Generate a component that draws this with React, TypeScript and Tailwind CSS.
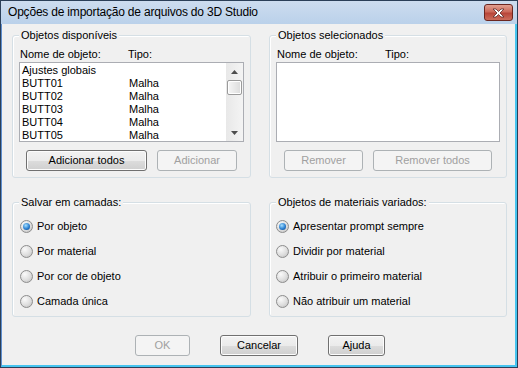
import React from "react";

const FONT = "font-['Liberation_Sans',Arial,sans-serif]";

const AVAILABLE = [
  { name: "Ajustes globais", type: "" },
  { name: "BUTT01", type: "Malha" },
  { name: "BUTT02", type: "Malha" },
  { name: "BUTT03", type: "Malha" },
  { name: "BUTT04", type: "Malha" },
  { name: "BUTT05", type: "Malha" },
];

function Button({ label, width, disabled }: { label: string; width: string; disabled?: boolean }) {
  return (
    <div
      className={`${width} h-[21px] shrink-0 rounded-[3px] border flex items-center justify-center text-[11px] leading-[13px] ${
        disabled
          ? "border-[#adb2b5] bg-[#f4f4f4] text-[#a0a0a0]"
          : "border-[#707070] bg-[linear-gradient(#f2f2f2_0%,#ebebeb_50%,#dddddd_50%,#cfcfcf_100%)] shadow-[inset_0_0_0_1px_#fcfcfc] text-black"
      }`}
    >
      {label}
    </div>
  );
}

function Radio({ label, checked }: { label: string; checked?: boolean }) {
  return (
    <div className="flex items-center h-[13px] gap-[4px]">
      <span className="w-[13px] h-[13px] rounded-full border border-[#8d8d8d] bg-[radial-gradient(circle_at_35%_30%,#fafafa,#dedede_55%,#bdbdbd)] flex items-center justify-center">
        {checked && (
          <span className="w-[7px] h-[7px] rounded-full bg-[radial-gradient(circle_at_40%_35%,#a6e0ff,#2b80d1_55%,#0c3b78)]" />
        )}
      </span>
      <span>{label}</span>
    </div>
  );
}

function Group({ title, className, children }: { title: string; className: string; children: React.ReactNode }) {
  return (
    <div className={`relative rounded-[3px] border border-[#d5dfe5] shadow-[inset_1px_1px_0_#ffffff] ${className}`}>
      <span className="absolute left-[6px] top-[-7px] px-[2px] bg-[#f0f0f0] leading-[13px]">{title}</span>
      {children}
    </div>
  );
}

function ScrollBar() {
  return (
    <div className="w-[17px] h-full flex flex-col bg-[linear-gradient(90deg,#e8e8e8,#f4f4f4)]">
      <div className="h-[17px] flex items-center justify-center">
        <svg width="7" height="4" viewBox="0 0 7 4"><path d="M3.5 0L7 4H0z" fill="#4d4d4d" /></svg>
      </div>
      <div className="h-[15px] mx-[1px] rounded-[2px] border border-[#9b9b9b] bg-[linear-gradient(90deg,#f6f6f6,#dcdcdc)] shadow-[inset_0_0_0_1px_#ffffff]" />
      <div className="flex-1" />
      <div className="h-[17px] flex items-center justify-center">
        <svg width="7" height="4" viewBox="0 0 7 4"><path d="M0 0H7L3.5 4z" fill="#4d4d4d" /></svg>
      </div>
    </div>
  );
}

function ListGroup({ title, width, children, buttons }: { title: string; width: string; children: React.ReactNode; buttons: React.ReactNode }) {
  return (
    <Group title={title} className={`${width} h-[143px] pt-[12px] px-[6px]`}>
      <div className="flex h-[13px] leading-[13px]">
        <span className="w-[109px] pl-[1px]">Nome de objeto:</span>
        <span>Tipo:</span>
      </div>
      <div className="mt-[1px] h-[80px] border border-[#abadb3] bg-white flex">{children}</div>
      <div className="mt-[8px] flex justify-center gap-[10px]">{buttons}</div>
    </Group>
  );
}

export default function App() {
  return (
    <div className={`${FONT} w-[518px] h-[368px] border border-[#2b3f58] bg-[#b9d1ea] flex flex-col text-[11px] leading-[13px] text-black`}>
      {/* title bar */}
      <div className="h-[23px] shrink-0 flex items-center justify-between pl-[7px] pr-[4px] bg-[linear-gradient(#cddcef,#bad1ea)]">
        <span className="text-[12px] leading-[15px] tracking-[-0.2px] text-black">Opções de importação de arquivos do 3D Studio</span>
        <div className="w-[29px] h-[17px] rounded-[3px] border border-[#6b2620] bg-[linear-gradient(#e2a091_0%,#cc6a5b_45%,#b8463a_55%,#cc6d5c_100%)] flex items-center justify-center">
          <svg width="13" height="10" viewBox="0 0 13 10">
            <path d="M1 1h3l2.5 2.5L9 1h3L8 5l4 4H9L6.5 6.5 4 9H1l4-4z" fill="#ffffff" stroke="#5a2a2a" strokeWidth="0.8" />
          </svg>
        </div>
      </div>

      {/* client */}
      <div className="flex-1 bg-[#f0f0f0] border-l border-l-[#5f8fd0] border-r-2 border-r-[#46c4ef] border-b-2 border-b-[#46c4ef] pl-[10px] pr-[7px] pt-[11px] flex flex-col">
        <div className="flex gap-[18px]">
          <ListGroup
            title="Objetos disponíveis"
            width="w-[239px]"
            buttons={
              <>
                <Button label="Adicionar todos" width="w-[121px]" />
                <Button label="Adicionar" width="w-[80px]" disabled />
              </>
            }
          >
            <div className="flex-1 pt-[1px] pl-[2px]">
              {AVAILABLE.map((row) => (
                <div key={row.name} className="flex h-[13px]">
                  <span className="w-[107px]">{row.name}</span>
                  <span>{row.type}</span>
                </div>
              ))}
            </div>
            <ScrollBar />
          </ListGroup>
          <ListGroup
            title="Objetos selecionados"
            width="w-[238px]"
            buttons={
              <>
                <Button label="Remover" width="w-[79px]" disabled />
                <Button label="Remover todos" width="w-[119px]" disabled />
              </>
            }
          >
            <div className="flex-1" />
          </ListGroup>
        </div>

        <div className="mt-[24px] flex gap-[18px]">
          <Group title="Salvar em camadas:" className="w-[239px] h-[115px] pt-[17px] pl-[7px] flex flex-col gap-[12px]">
            <Radio label="Por objeto" checked />
            <Radio label="Por material" />
            <Radio label="Por cor de objeto" />
            <Radio label="Camada única" />
          </Group>
          <Group title="Objetos de materiais variados:" className="w-[238px] h-[115px] pt-[17px] pl-[6px] flex flex-col gap-[12px]">
            <Radio label="Apresentar prompt sempre" checked />
            <Radio label="Dividir por material" />
            <Radio label="Atribuir o primeiro material" />
            <Radio label="Não atribuir um material" />
          </Group>
        </div>

        <div className="mt-[18px] flex justify-center gap-[30px]">
          <Button label="OK" width="w-[55px]" disabled />
          <Button label="Cancelar" width="w-[78px]" />
          <Button label="Ajuda" width="w-[57px]" />
        </div>
      </div>
    </div>
  );
}
